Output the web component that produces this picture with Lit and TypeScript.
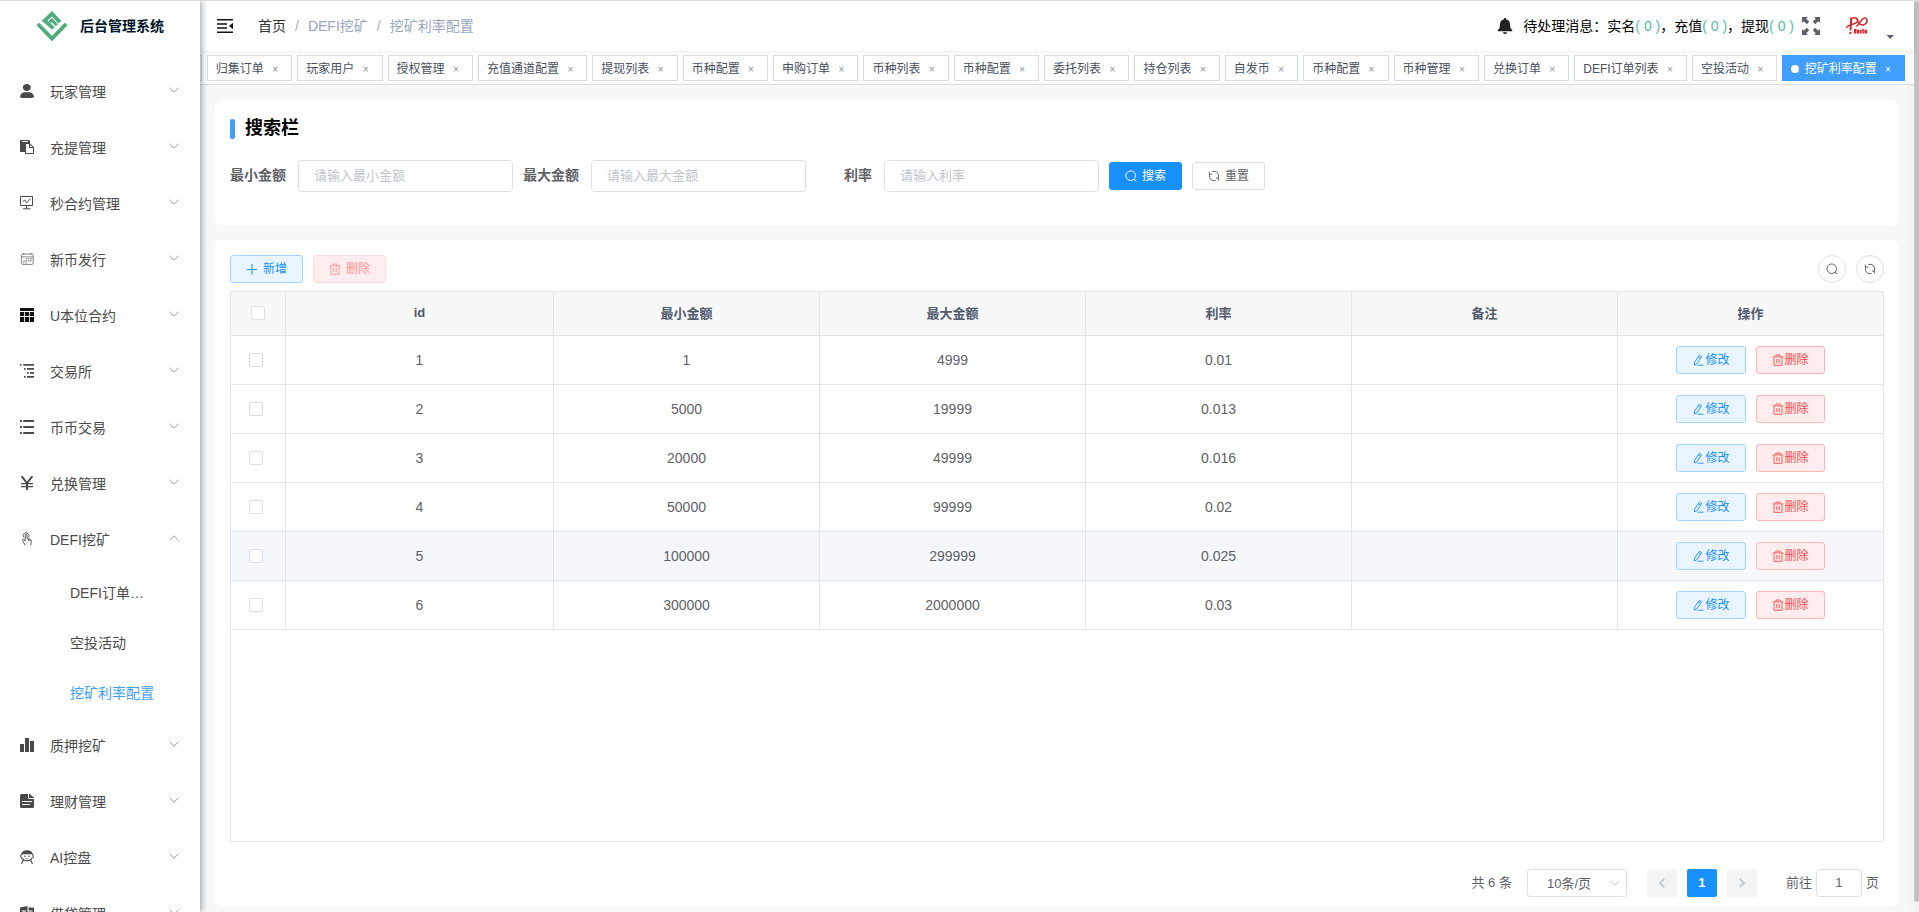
import { LitElement, html, css, svg, nothing } from "lit";
import { customElement, state } from "lit/decorators.js";
import { classMap } from "lit/directives/class-map.js";

const glyphs: Record<string, { box: string; body: unknown }> = {
  user: {
    box: "0 0 130 130",
    body: svg`<path d="M63.444 64.996c20.633 0 37.359-14.308 37.359-31.953 0-17.649-16.726-31.952-37.359-31.952-20.631 0-37.36 14.303-37.36 31.952 0 17.645 16.729 31.953 37.36 31.953zM80.57 75.65H49.434c-26.652 0-48.26 18.477-48.26 41.27v2.664c0 9.316 21.608 9.325 48.26 9.325H80.57c26.649 0 48.256-.344 48.256-9.325v-2.663c0-22.794-21.605-41.271-48.256-41.271z"/>`,
  },
  clipboard: {
    box: "0 0 128 128",
    body: svg`<path d="M54.857 118.857h64V73.143H89.143c-1.902 0-3.52-.668-4.855-2.002-1.335-1.335-2.002-2.954-2.002-4.855V36.57H54.857v82.286zM73.143 16v-4.571a2.2 2.2 0 0 0-.677-1.61 2.198 2.198 0 0 0-1.609-.676H20.571c-.621 0-1.158.225-1.609.676a2.198 2.198 0 0 0-.676 1.61V16a2.2 2.2 0 0 0 .676 1.61c.451.45.988.676 1.61.676h50.285c.622 0 1.158-.226 1.61-.677.45-.45.676-.987.676-1.609zm18.286 48h21.357L91.43 42.642V64zM128 73.143v48c0 1.902-.667 3.52-2.002 4.855-1.335 1.335-2.953 2.002-4.855 2.002H52.57c-1.901 0-3.52-.667-4.854-2.002-1.335-1.335-2.003-2.953-2.003-4.855v-11.429H6.857c-1.902 0-3.52-.667-4.855-2.002C.667 106.377 0 104.759 0 102.857v-96c0-1.902.667-3.52 2.002-4.855C3.337.667 4.955 0 6.857 0h77.714c1.902 0 3.52.667 4.855 2.002 1.335 1.335 2.003 2.953 2.003 4.855V30.29c1 .622 1.856 1.29 2.569 2.003l29.147 29.147c1.335 1.335 2.478 3.145 3.429 5.43.95 2.287 1.426 4.383 1.426 6.291v-.018z"/>`,
  },
  board: {
    box: "0 0 14 14",
    body: svg`<g fill="none" stroke="currentColor"><path d="M.5.5h12v9H.5zM6.5 9.5v3M3 12.8h7.5"/><path d="M2.8 5.6l2-1.6 1.8 2.8L10.6 2.6"/></g>`,
  },
  calendar: {
    box: "0 0 14 14",
    body: svg`<g fill="none" stroke="currentColor" stroke-width=".8" opacity=".85"><rect x="1.4" y="2" width="11.8" height="10.4" rx="1.4"/><path d="M1.4 4.9h11.8M3.8.9v2M10.8.9v2"/></g><path opacity=".7" d="M6 6.2h1.4v1.2H6zM8.2 6.2h1.4v1.2H8.2zM10.4 6.2h1.4v1.2h-1.4zM3.4 8.2h1.4v1.2H3.4zM5.6 8.2H7v1.2H5.6zM7.8 8.2h1.4v1.2H7.8zM10 8.2h1.4v1.2H10zM3 10.2h1.4v1H3zM5.4 10.2h1.4v1H5.4z"/>`,
  },
  grid: {
    box: "0 0 14 14",
    body: svg`<g fill="#111"><path d="M0 0h14v3H0zM0 4h4.200v4H0zM5 4h4v4H5zM9.800 4H14v4H9.800zM0 9h4.200v5H0zM5 9h4v5H5zM9.800 9H14v5H9.800z"/></g>`,
  },
  tree: {
    box: "0 0 14 14",
    body: svg`<path d="M0 0h1.600v1.800H0zM3.300 0H14v1.800H3.300zM4 4h1.600v1.800H4zM7 4h7v1.800H7zM7 8h1.600v1.800H7zM10 8h4v1.800h-4zM4 12h1.600v1.800H4zM7 12h7v1.800H7z"/>`,
  },
  list: {
    box: "0 0 14 14",
    body: svg`<path d="M0 0h1.800v2H0zM3.300 0H14v2H3.300zM0 6h1.800v2H0zM3.300 6H14v2H3.300zM0 12h1.800v2H0zM3.300 12H14v2H3.300z"/>`,
  },
  yen: {
    box: "0 0 14 14",
    body: svg`<g fill="none" stroke="currentColor"><path stroke-width="2" d="M1.600.2l5.400 7 5.400-7M7 7v7"/><path stroke-width="1.300" d="M1 7.700h12M1 10.700h12"/></g>`,
  },
  tap: {
    box: "0 0 14 14",
    body: svg`<g fill="none" stroke="currentColor" stroke-width=".9"><path d="M3.600 5.500a3 3 0 1 1 4.900 0"/><path d="M5.200 9V3.200a.9.900 0 0 1 1.800 0V6.500l3 .8c1 .3 1.500.9 1.300 2l-.6 4M5.200 8.600L3.700 7.400c-.8-.5-1.500.2-1.100.9l2.600 5"/><path d="M8.600 7v2M10 7.400v1.800"/></g>`,
  },
  chart: {
    box: "0 0 14 14",
    body: svg`<path d="M0 6h4v8H0zM5 0h4v14H5zM10 3h4v11h-4z"/>`,
  },
  doc: {
    box: "0 0 14 14",
    body: svg`<path fill-rule="evenodd" d="M1.500 0H8v3.500A1.500 1.500 0 0 0 9.500 5H14v7.500a1.500 1.500 0 0 1-1.500 1.500h-11A1.500 1.500 0 0 1 0 12.500v-11A1.500 1.500 0 0 1 1.500 0zM2 7v1h10V7zM2 10v1h8v-1z"/><path d="M9 0h.8L14 3.600V4H9.600A.6.600 0 0 1 9 3.400z"/>`,
  },
  face: {
    box: "0 0 14 14",
    body: svg`<path d="M.8 5.500C1.200 2 3.500.2 7 .2s5.800 1.800 6.200 5.300L11.600 4.200c-3 .2-6.200.2-9.200 0z"/><path fill="none" stroke="currentColor" stroke-width="1.100" d="M2.200 4C.3 4.500.3 7.700 2.100 8.200 3 10 4.700 10.800 7 10.800s4-.8 4.900-2.600c1.800-.5 1.800-3.700-.1-4.200M3.200 10.200L1.500 14M10.800 10.200l1.700 3.800"/><circle cx="4.900" cy="6.300" r=".8"/><circle cx="9.100" cy="6.300" r=".8"/><path fill="none" stroke="currentColor" stroke-width=".7" d="M5.500 8.600q1.500.8 3 0"/>`,
  },
  office: {
    box: "0 0 14 14",
    body: svg`<path fill-rule="evenodd" d="M0 1.500L7.500 0v14L0 12.500zM2 4l1.300 3L2 10h1.200l.8-2 .9 2h1.200L4.700 7 6 4H4.900L4 6l-.8-2z"/><path d="M8.500 1.500H14v11H8.500v-1.700h4V9.600h-4V8.200h4V7h-4V5.600h4V4.400h-4z"/>`,
  },
  down: {
    box: "0 0 12 12",
    body: svg`<path fill="none" stroke="currentColor" d="M1.500 3.800L6 8.200l4.500-4.400"/>`,
  },
  up: {
    box: "0 0 12 12",
    body: svg`<path fill="none" stroke="currentColor" d="M1.500 8.200L6 3.800l4.500 4.400"/>`,
  },
  left: {
    box: "0 0 12 12",
    body: svg`<path fill="none" stroke="currentColor" stroke-width="1.700" d="M8.300 1.800L4 6l4.300 4.200"/>`,
  },
  right: {
    box: "0 0 12 12",
    body: svg`<path fill="none" stroke="currentColor" stroke-width="1.700" d="M3.700 1.800L8 6l-4.300 4.200"/>`,
  },
  plus: {
    box: "0 0 12 12",
    body: svg`<path fill="none" stroke="currentColor" d="M6 1v10.500M1 6.500h10"/>`,
  },
  trash: {
    box: "0 0 12 12",
    body: svg`<g fill="none" stroke="currentColor" stroke-width=".9"><path d="M.8 2.900h10.400M3.900 2.700V1h4.200v1.700M2 3v8.300h8V3M4.800 5v4.300M7.200 5v4.300"/></g>`,
  },
  search: {
    box: "0 0 12 12",
    body: svg`<g fill="none" stroke="currentColor"><circle cx="5.700" cy="5.700" r="4.800"/><path d="M9 9.200l2.300 2.200"/></g>`,
  },
  refresh: {
    box: "0 0 12 12",
    body: svg`<g fill="none" stroke="currentColor"><path d="M1.600 7.600A4.700 4.700 0 0 1 1.700 4M4.300 1.600a4.700 4.700 0 0 1 6.100 6"/><path d="M10.200 8a4.700 4.700 0 0 1-.6.900M7.700 10.400a4.700 4.700 0 0 1-6-2.600"/><path d="M1.300 1.600v2.600H4M10.700 10.600V8H8"/></g>`,
  },
  edit: {
    box: "0 0 12 12",
    body: svg`<g fill="none" stroke="currentColor" stroke-width=".9"><path d="M7.400 1.200l2.200 1.300-4.600 7.200-2.600 1.300.2-2.900zM6.200 2.800l2.300 1.400M5.500 11.200h6"/></g>`,
  },
  fold: {
    box: "0 0 16 14",
    body: svg`<path d="M0 0h16v1.500H0zM0 4.200h10v1.500H0zM0 8.300h10v1.500H0zM0 12.500h16V14H0zM16 3.800v6.400L12 7z"/>`,
  },
  bell: {
    box: "0 0 16 16",
    body: svg`<path d="M8 0c.7 0 1.100.5 1.100 1.200 2.500.6 3.900 2.500 3.900 5 0 3 .6 4.500 2 5.600.6.500.4 1.400-.5 1.400h-13c-.9 0-1.100-.9-.5-1.400 1.400-1.100 2-2.600 2-5.600 0-2.500 1.400-4.400 3.900-5C6.900.5 7.300 0 8 0zM6 14.200h4c0 1.100-.9 1.800-2 1.800s-2-.7-2-1.800z"/>`,
  },
  expand: {
    box: "0 0 18 18",
    body: svg`<path d="M0 0h6L4.200 1.800l3 3-2.400 2.400-3-3L0 6zM18 0v6l-1.800-1.800-3 3-2.400-2.400 3-3L12 0zM0 18v-6l1.800 1.800 3-3 2.400 2.400-3 3L6 18zM18 18h-6l1.800-1.800-3-3 2.400-2.400 3 3L18 12z"/>`,
  },
  caret: { box: "0 0 12 12", body: svg`<path d="M2.500 4h7.500L6.200 8z"/>` },
  logo: {
    box: "0 0 32 32",
    body: svg`<g fill="none" stroke="#4fab79" stroke-width="3.800"><path d="M1.800 14L16 28.500 30.200 14"/><path d="M23.800 12.300L16 3.600 8.600 10.600l8.800 7.800"/><path stroke-width="3" d="M13.600 12.200l2.400-2.200 4.800 5.200"/></g>`,
  },
  brand: {
    box: "0 0 24 20",
    body: svg`<g fill="none" stroke="#d9262f" stroke-linecap="round"><path stroke-width="2" d="M6.200 2.500L5.600 13.500"/><path stroke-width="1.500" d="M6 3C10.500.4 14 2.600 12.300 5.800 10.500 8.500 5 8 1.500 11.200M12 3.500c1.800 5 4.800 6.600 8 4.700 3.300-2.200 2.300-6.700-.6-6.200-3.400.7-4.200 5.600-7.600 8"/></g><path fill="#d9262f" d="M4.400 16h2v2h-2zM9 13h2.500v4.500H9zM12 13.800h2v3.700h-2zM14.600 13.800h2v3.700h-2zM17.200 13h1.600v4.500h-1.600zM19.400 13.800h2.600v3.700h-2.600z"/>`,
  },
};

const icon = (name: string, cls = "") => html`<svg
  class="icon ${cls}"
  viewBox=${glyphs[name].box}
  aria-hidden="true"
>${glyphs[name].body}</svg>`;

const base = css`
  * {
    box-sizing: border-box;
  }
  button,
  input,
  select {
    font: inherit;
    margin: 0;
  }
  button {
    cursor: pointer;
  }
  a {
    color: inherit;
    text-decoration: none;
  }
  .icon {
    display: block;
    flex: none;
    width: 12px;
    height: 12px;
    fill: currentColor;
  }
  .btn {
    display: inline-flex;
    align-items: center;
    gap: 5px;
    height: 28px;
    padding: 0 15px;
    border: 1px solid #dcdfe6;
    border-radius: 3px;
    background: #fff;
    color: #606266;
    font-size: 12px;
    line-height: 12px;
    white-space: nowrap;
  }
  .btn.tight {
    gap: 1px;
  }
  .btn.solid {
    background: #1890ff;
    border-color: #1890ff;
    color: #fff;
  }
  .btn.primary {
    background: #e8f4ff;
    border-color: #a3d3ff;
    color: #1890ff;
  }
  .btn.danger {
    background: #ffeded;
    border-color: #ffb6b6;
    color: #ff4949;
  }
  .btn.danger:disabled {
    border-color: #ffdbdb;
    color: #ff9292;
    cursor: not-allowed;
  }
  .btn.round {
    width: 28px;
    padding: 0;
    justify-content: center;
    border-radius: 50%;
  }
`;

interface MenuEntry {
  icon: string;
  label: string;
  children?: string[];
}

const menu: MenuEntry[] = [
  { icon: "user", label: "玩家管理" },
  { icon: "clipboard", label: "充提管理" },
  { icon: "board", label: "秒合约管理" },
  { icon: "calendar", label: "新币发行" },
  { icon: "grid", label: "U本位合约" },
  { icon: "tree", label: "交易所" },
  { icon: "list", label: "币币交易" },
  { icon: "yen", label: "兑换管理" },
  { icon: "tap", label: "DEFI挖矿", children: ["DEFI订单…", "空投活动", "挖矿利率配置"] },
  { icon: "chart", label: "质押挖矿" },
  { icon: "doc", label: "理财管理" },
  { icon: "face", label: "AI控盘" },
  { icon: "office", label: "借贷管理" },
];

@customElement("side-menu")
export class SideMenu extends LitElement {
  static styles = [
    base,
    css`
      :host {
        display: block;
        flex: none;
        width: 200px;
        overflow: hidden;
        background: #fff;
        color: #4a4a4a;
        font-size: 14px;
      }
      .brand {
        display: flex;
        align-items: center;
        gap: 12px;
        height: 50px;
        margin-bottom: 12px;
        padding: 0 36px;
        color: #001529;
      }
      .brand .icon {
        width: 32px;
        height: 32px;
      }
      .title {
        margin: 0;
        font-size: 14px;
        line-height: 50px;
        white-space: nowrap;
      }
      ul {
        margin: 0;
        padding: 0;
        list-style: none;
      }
      .entry {
        display: flex;
        align-items: center;
        width: 100%;
        height: 56px;
        padding: 0 20px;
        border: 0;
        background: none;
        color: inherit;
        text-align: left;
      }
      .entry .icon {
        width: 14px;
        height: 14px;
      }
      .entry .arrow {
        width: 12px;
        height: 12px;
        color: #9a9a9a;
        margin-bottom: 2px;
      }
      .text {
        flex: 1;
        margin-left: 16px;
        padding-top: 2px;
        line-height: 20px;
      }
      .child {
        display: block;
        height: 50px;
        padding-left: 70px;
        line-height: 52px;
      }
      .child.current {
        color: #409eff;
      }
    `,
  ];

  render() {
    return html`
      <a class="brand" href="#">${icon("logo")}<h1 class="title">后台管理系统</h1></a>
      <nav>
        <ul>
          ${menu.map(
            (m) => html`<li>
              <button class="entry" aria-expanded=${m.children ? "true" : "false"}>
                ${icon(m.icon)}<span class="text">${m.label}</span>${icon(m.children ? "up" : "down", "arrow")}
              </button>
              ${m.children
                ? html`<ul>
                    ${m.children.map(
                      (c) => html`<li><a href="#" class=${classMap({ child: true, current: c === "挖矿利率配置" })}>${c}</a></li>`
                    )}
                  </ul>`
                : nothing}
            </li>`
          )}
        </ul>
      </nav>
    `;
  }
}

@customElement("top-bar")
export class TopBar extends LitElement {
  static styles = [
    base,
    css`
      :host {
        display: flex;
        align-items: center;
        flex: none;
        height: 50px;
        padding: 0 18px 0 17px;
        background: #fff;
        box-shadow: 0 1px 4px rgba(0, 21, 41, 0.08);
        font-size: 14px;
        line-height: 20px;
        position: relative;
      }
      .plain {
        padding: 0;
        border: 0;
        background: none;
        color: #5a5e66;
      }
      .fold .icon {
        width: 16px;
        height: 14px;
        color: #111;
      }
      .crumbs {
        display: flex;
        margin-left: 25px;
        color: #97a8be;
      }
      .crumbs a {
        color: #303133;
      }
      .sep {
        margin: 0 9px;
        color: #a8adb8;
      }
      .right {
        display: flex;
        align-items: center;
        margin-left: auto;
      }
      .bell {
        width: 16px;
        height: 16px;
        color: #222;
        margin-right: 10px;
      }
      .notice {
        color: #000;
      }
      .notice .count {
        color: #50bfa5;
      }
      .expand {
        margin-left: 8px;
      }
      .expand .icon {
        width: 18px;
        height: 18px;
      }
      .profile {
        display: flex;
        align-items: center;
        gap: 15px;
        margin-left: 25px;
      }
      .profile .face {
        width: 24px;
        height: 20px;
      }
      .profile .arrow {
        margin-top: 22px;
      }
    `,
  ];

  render() {
    return html`
      <button class="plain fold" aria-label="折叠菜单">${icon("fold")}</button>
      <nav class="crumbs">
        <a href="#">首页</a><span class="sep">/</span><span>DEFI挖矿</span><span class="sep">/</span><span>挖矿利率配置</span>
      </nav>
      <div class="right">
        ${icon("bell", "bell")}
        <span class="notice">待处理消息：实名<a class="count" href="#">( 0 )</a>，充值<a class="count" href="#">( 0 )</a>，提现<a class="count" href="#">( 0 )</a></span>
        <button class="plain expand" aria-label="全屏">${icon("expand")}</button>
        <button class="plain profile" aria-label="账户">${icon("brand", "face")}${icon("caret", "arrow")}</button>
      </div>
    `;
  }
}

const tabs = [
  "归集订单", "玩家用户", "授权管理", "充值通道配置", "提现列表", "币种配置", "申购订单", "币种列表", "币种配置",
  "委托列表", "持仓列表", "自发币", "币种配置", "币种管理", "兑换订单", "DEFI订单列表", "空投活动", "挖矿利率配置",
];

@customElement("tag-strip")
export class TagStrip extends LitElement {
  static styles = [
    base,
    css`
      :host {
        display: flex;
        flex: none;
        align-items: center;
        justify-content: flex-end;
        gap: 5px;
        height: 34px;
        padding-right: 9px;
        overflow: hidden;
        background: #fff;
        border-bottom: 1px solid #d8dce5;
        font-size: 12px;
      }
      /* edge of the tab that is scrolled out on the left */
      :host::before {
        content: "";
        flex: none;
        width: 20px;
        height: 26px;
        border: 1px solid #d8dce5;
        box-sizing: border-box;
      }
      .tag {
        flex: none;
        height: 26px;
        padding: 0 8px;
        border: 1px solid #d8dce5;
        color: #495060;
        line-height: 26px;
        white-space: nowrap;
      }
      .tag.active {
        background: #409eff;
        border-color: #409eff;
        color: #fff;
      }
      .dot {
        display: inline-block;
        width: 8px;
        height: 8px;
        margin-right: 2px;
        border-radius: 50%;
        background: #fff;
      }
      .close {
        display: inline-block;
        width: 16px;
        text-align: center;
        font-size: 10px;
        color: #8c9099;
      }
      .active .close {
        color: #fff;
      }
    `,
  ];

  render() {
    const last = tabs.length - 1;
    return tabs.map(
      (t, i) =>
        html`<a href="#" class=${classMap({ tag: true, active: i === last })}>${i === last ? html`<span class="dot"></span> ` : nothing}${t} <span class="close">×</span></a>`
    );
  }
}

@customElement("search-panel")
export class SearchPanel extends LitElement {
  static styles = [
    base,
    css`
      :host {
        display: block;
        padding: 15px 15px 33px;
        border-radius: 8px;
        background: #fff;
        font-size: 14px;
      }
      .heading {
        display: flex;
        align-items: center;
        gap: 10px;
        margin: 0 0 18px;
        font-size: 18px;
        line-height: 27px;
        color: #000;
      }
      .heading::before {
        content: "";
        width: 5px;
        height: 20px;
        border-radius: 2px;
        background: #409eff;
      }
      form {
        display: flex;
        align-items: center;
        flex-wrap: wrap;
        gap: 10px;
      }
      .field {
        display: flex;
        align-items: center;
      }
      label {
        width: 68px;
        height: 32px;
        padding-right: 12px;
        text-align: right;
        font-weight: 700;
        line-height: 30px;
        white-space: nowrap;
        color: #606266;
      }
      input {
        width: 215px;
        height: 32px;
        padding: 0 15px 2px;
        border: 1px solid #dcdfe6;
        border-radius: 4px;
        font-size: 13px;
        color: #606266;
      }
      input::placeholder {
        color: #c0c4cc;
      }
    `,
  ];

  private field(id: string, label: string) {
    return html`<div class="field">
      <label for=${id}>${label}</label>
      <input id=${id} type="text" placeholder="请输入${label}" />
    </div>`;
  }

  render() {
    return html`
      <h2 class="heading">搜索栏</h2>
      <form @submit=${(e: Event) => e.preventDefault()}>
        ${this.field("min", "最小金额")}${this.field("max", "最大金额")}${this.field("rate", "利率")}
        <button class="btn solid" type="submit">${icon("search")}搜索</button>
        <button class="btn" type="reset">${icon("refresh")}重置</button>
      </form>
    `;
  }
}

const rows = [
  [1, "1", "4999", "0.01"],
  [2, "5000", "19999", "0.013"],
  [3, "20000", "49999", "0.016"],
  [4, "50000", "99999", "0.02"],
  [5, "100000", "299999", "0.025"],
  [6, "300000", "2000000", "0.03"],
] as const;

@customElement("rate-table")
export class RateTable extends LitElement {
  @state() private highlighted = 5;

  static styles = [
    base,
    css`
      :host {
        display: flex;
        flex-direction: column;
        flex: 1;
        min-height: 0;
        padding: 15px 15px 10px;
        border-radius: 8px;
        background: #fff;
        color: #606266;
      }
      .tools {
        display: flex;
        gap: 10px;
        margin-bottom: 8px;
      }
      .push {
        margin-left: auto;
      }
      .frame {
        flex: 1;
        border: 1px solid #dfe6ec;
        overflow: hidden;
      }
      table {
        width: 100%;
        table-layout: fixed;
        border-collapse: separate;
        border-spacing: 0;
        text-align: center;
        font-size: 14px;
      }
      .c-check {
        width: 55px;
      }
      .c-id {
        width: 268px;
      }
      .c-act {
        width: 265px;
      }
      th,
      td {
        padding: 0;
        border-right: 1px solid #dfe6ec;
        border-bottom: 1px solid #dfe6ec;
      }
      th:last-child,
      td:last-child {
        border-right: 0;
      }
      th {
        height: 44px;
        padding-bottom: 2px;
        background: #f8f8f9;
        color: #515a6e;
        font-size: 13px;
      }
      td {
        height: 49px;
      }
      td:first-child {
        padding-right: 4px;
      }
      .hover td {
        background: #f5f7fa;
      }
      .box {
        appearance: none;
        display: block;
        width: 14px;
        height: 14px;
        margin: 0 auto;
        border: 1px solid #dcdfe6;
        border-radius: 2px;
        background: #fff;
      }
      .actions {
        display: flex;
        justify-content: center;
        gap: 10px;
      }
      .pager {
        display: flex;
        align-items: center;
        justify-content: flex-end;
        margin-top: 27px;
        padding-right: 5px;
        font-size: 13px;
        line-height: 28px;
      }
      .size {
        display: grid;
        align-items: center;
        width: 100px;
        margin: 0 20px 0 15px;
      }
      .size > * {
        grid-area: 1 / 1;
      }
      .size .icon {
        justify-self: end;
        margin-right: 6px;
        color: #c0c4cc;
        pointer-events: none;
      }
      select {
        appearance: none;
        width: 100%;
        height: 28px;
        padding: 0 25px 2px 19px;
        border: 1px solid #dcdfe6;
        border-radius: 3px;
        background: #fff;
        color: #606266;
      }
      .pages {
        display: flex;
        gap: 10px;
        margin-right: 29px;
      }
      .page {
        display: grid;
        place-items: center;
        width: 30px;
        height: 28px;
        padding: 0;
        border: 0;
        border-radius: 2px;
        background: #f4f4f5;
        color: #c0c4cc;
      }
      .page.on {
        background: #1890ff;
        color: #fff;
        font-weight: 700;
      }
      .jump {
        display: flex;
        gap: 4px;
      }
      .jump input {
        width: 46px;
        height: 28px;
        padding: 0 3px;
        border: 1px solid #dcdfe6;
        border-radius: 4px;
        color: #606266;
        text-align: center;
      }
    `,
  ];

  render() {
    return html`
      <div class="tools">
        <button class="btn primary">${icon("plus")}新增</button>
        <button class="btn danger" disabled>${icon("trash")}删除</button>
        <button class="btn round push" aria-label="显示搜索">${icon("search")}</button>
        <button class="btn round" aria-label="刷新">${icon("refresh")}</button>
      </div>
      <div class="frame">
        <table>
          <colgroup>
            <col class="c-check" /><col class="c-id" /><col /><col /><col /><col /><col class="c-act" />
          </colgroup>
          <thead>
            <tr>
              <th><input class="box" type="checkbox" aria-label="全选" /></th>
              <th>id</th>
              <th>最小金额</th>
              <th>最大金额</th>
              <th>利率</th>
              <th>备注</th>
              <th>操作</th>
            </tr>
          </thead>
          <tbody>
            ${rows.map(
              (r) => html`<tr class=${classMap({ hover: r[0] === this.highlighted })} @mouseenter=${() => (this.highlighted = r[0])}>
                <td><input class="box" type="checkbox" aria-label="选择 ${r[0]}" /></td>
                ${r.map((v) => html`<td>${v}</td>`)}
                <td></td>
                <td>
                  <div class="actions">
                    <button class="btn tight primary">${icon("edit")}修改</button>
                    <button class="btn tight danger">${icon("trash")}删除</button>
                  </div>
                </td>
              </tr>`
            )}
          </tbody>
        </table>
      </div>
      <div class="pager">
        <span>共 6 条</span>
        <div class="size">
          <select aria-label="每页条数"><option>10条/页</option></select>
          ${icon("down")}
        </div>
        <div class="pages">
          <button class="page" disabled aria-label="上一页">${icon("left")}</button>
          <button class="page on">1</button>
          <button class="page" disabled aria-label="下一页">${icon("right")}</button>
        </div>
        <div class="jump"><label for="goto">前往</label><input id="goto" type="text" value="1" /><span>页</span></div>
      </div>
    `;
  }
}

@customElement("app-root")
export class AppRoot extends LitElement {
  static styles = [
    base,
    css`
      :host {
        display: flex;
        height: 100vh;
        overflow: hidden;
        border-top: 1px solid #dcdcdc;
        background: #f8f8f8;
        font-family: "Liberation Sans", "Noto Sans CJK SC", sans-serif;
        box-sizing: border-box;
      }
      side-menu {
        position: relative;
        z-index: 1;
        box-shadow: 2px 0 6px rgba(0, 21, 41, 0.35);
      }
      main {
        display: flex;
        flex-direction: column;
        flex: 1;
        min-width: 0;
      }
      .content {
        display: flex;
        flex-direction: column;
        flex: 1;
        gap: 15px;
        min-height: 0;
        padding: 15px 15px 5px;
      }
      .rail {
        flex: none;
        width: 5px;
        background: #f1f1f1;
        box-shadow: -2px 0 10px rgba(0, 0, 0, 0.06);
        padding-bottom: 10px;
      }
      .thumb {
        height: 100%;
        border-radius: 3px;
        background: #c1c1c1;
      }
    `,
  ];

  render() {
    return html`
      <side-menu></side-menu>
      <main>
        <top-bar></top-bar>
        <tag-strip></tag-strip>
        <div class="content">
          <search-panel></search-panel>
          <rate-table></rate-table>
        </div>
      </main>
      <div class="rail"><div class="thumb"></div></div>
    `;
  }
}
